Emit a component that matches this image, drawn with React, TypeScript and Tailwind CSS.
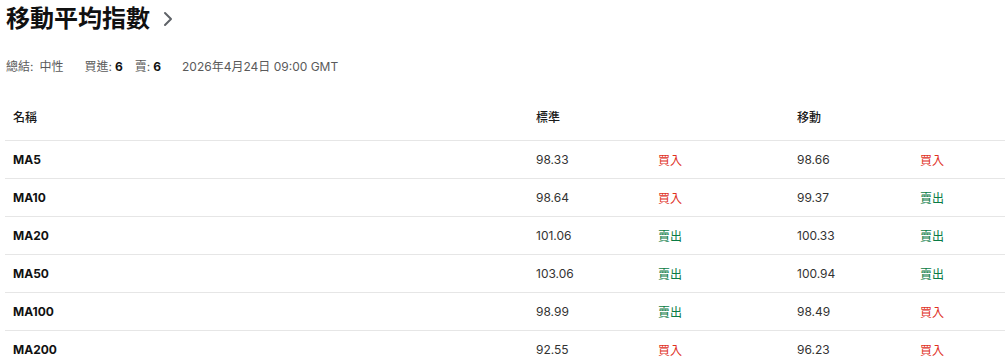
import React from "react";

type Signal = "buy" | "sell";

const rows: { name: string; std: string; stdSig: Signal; mov: string; movSig: Signal }[] = [
  { name: "MA5", std: "98.33", stdSig: "buy", mov: "98.66", movSig: "buy" },
  { name: "MA10", std: "98.64", stdSig: "buy", mov: "99.37", movSig: "sell" },
  { name: "MA20", std: "101.06", stdSig: "sell", mov: "100.33", movSig: "sell" },
  { name: "MA50", std: "103.06", stdSig: "sell", mov: "100.94", movSig: "sell" },
  { name: "MA100", std: "98.99", stdSig: "sell", mov: "98.49", movSig: "buy" },
  { name: "MA200", std: "92.55", stdSig: "buy", mov: "96.23", movSig: "buy" },
];

const SignalText = ({ s }: { s: Signal }) =>
  s === "buy" ? (
    <span className="text-[#e0311e]">買入</span>
  ) : (
    <span className="text-[#0a7b45]">賣出</span>
  );

export default function App() {
  return (
    <div
      className="w-[1005px] h-[362px] overflow-hidden bg-white text-[#1a1a1a]"
      style={{ fontFamily: 'Inter, "Noto Sans CJK TC", sans-serif' }}
    >
      <div className="flex items-center pl-[6px] pt-[3px] h-[34px]">
        <h1 className="text-[24px] font-bold leading-none tracking-[0px] text-[#111]">移動平均指數</h1>
        <svg className="ml-[13px] mt-[1px]" width="10" height="16" viewBox="0 0 10 16" fill="none">
          <path d="M2 2l6 6-6 6" stroke="#5f6368" strokeWidth="2" strokeLinecap="round" strokeLinejoin="round" />
        </svg>
      </div>

      <div className="flex items-center pl-[6px] mt-[25px] text-[12px] text-[#5a5a5a] h-[16px]">
        <span>總結:</span>
        <span className="ml-[6px]">中性</span>
        <span className="ml-[21px]">買進:</span>
        <span className="ml-[3px] font-bold text-[#111]">6</span>
        <span className="ml-[12px]">賣:</span>
        <span className="ml-[3px] font-bold text-[#111]">6</span>
        <span className="ml-[21px]">2026年4月24日 09:00 GMT</span>
      </div>

      <table className="ml-[5px] mt-[21px] w-[1000px] border-collapse text-[12px]">
        <colgroup>
          <col className="w-[523px]" />
          <col className="w-[122px]" />
          <col className="w-[139px]" />
          <col className="w-[123px]" />
          <col />
        </colgroup>
        <thead>
          <tr className="h-[44px] border-b border-[#e6e6e6] text-left">
            <th className="pl-[8px] font-medium">名稱</th>
            <th className="pl-[8px] font-medium">標準</th>
            <th />
            <th className="pl-[8px] font-medium">移動</th>
            <th />
          </tr>
        </thead>
        <tbody>
          {rows.map((r) => (
            <tr key={r.name} className="h-[38px] border-b border-[#e6e6e6]">
              <td className="pl-[8px] pt-[2px] font-bold text-[#111]">{r.name}</td>
              <td className="pl-[8px] pt-[2px] text-[#333]">{r.std}</td>
              <td className="pl-[8px] pt-[4px]">
                <SignalText s={r.stdSig} />
              </td>
              <td className="pl-[8px] pt-[2px] text-[#333]">{r.mov}</td>
              <td className="pl-[8px] pt-[4px]">
                <SignalText s={r.movSig} />
              </td>
            </tr>
          ))}
        </tbody>
      </table>
    </div>
  );
}
